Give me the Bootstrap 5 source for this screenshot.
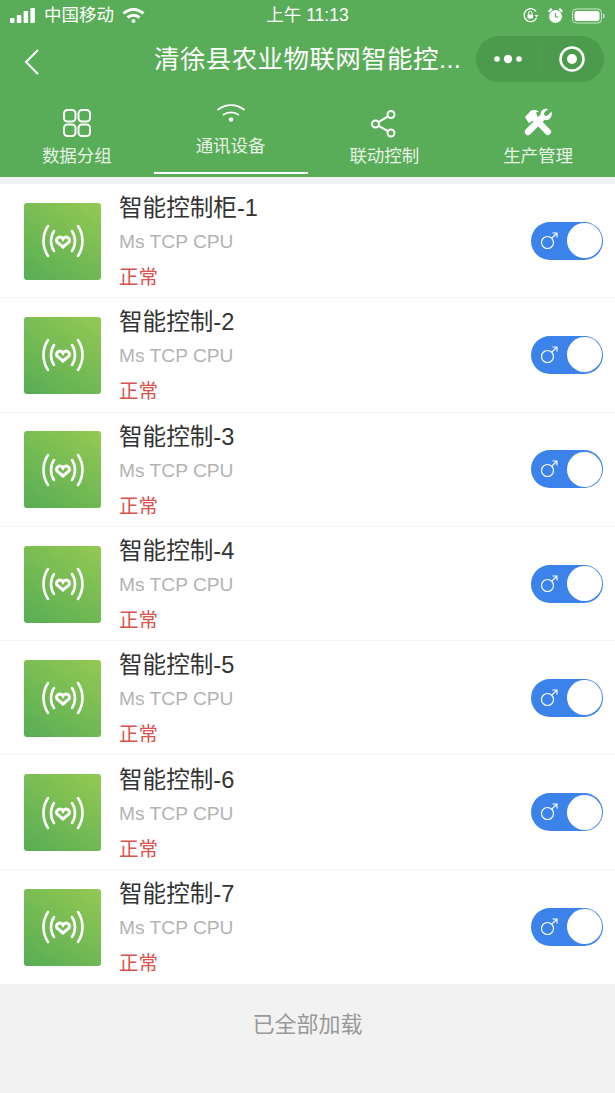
<!DOCTYPE html>
<html lang="zh">
<head>
  <meta charset="UTF-8">
  <meta name="viewport" content="width=device-width, initial-scale=1.0">
  <title>通讯设备</title>
  <link href="https://cdn.jsdelivr.net/npm/bootstrap@5.3.0/dist/css/bootstrap.min.css" rel="stylesheet">
  <style>
    html, body {
      height: 100%;
    }
    body {
      font-family: "Liberation Sans", "Noto Sans CJK SC", sans-serif;
      background-color: #f2f2f2;
      overflow: hidden;
    }
    .app-head {
      background-color: #5aad58;
      color: #fff;
      height: 177px;
    }
    .status-bar {
      height: 31px;
      padding: 0 10px;
      font-size: 17.5px;
      line-height: 31px;
    }
    .status-side {
      flex: 1 1 0;
    }
    .title-bar {
      height: 56px;
      padding: 0 11px 0 23px;
    }
    .title-text {
      width: 308px;
      margin-left: 131px;
      margin-right: 14px;
      font-size: 25.5px;
      letter-spacing: .4px;
      white-space: nowrap;
      text-align: left;
      flex: none;
    }
    .back-ico {
      position: absolute;
      margin-top: 6px;
      margin-left: 1px;
    }
    .capsule {
      width: 128px;
      height: 46px;
      border-radius: 23px;
      background-color: #4c9a4c;
      flex: none;
    }
    .capsule-part {
      flex: 1 1 0;
    }
    .capsule-line {
      width: 1px;
      height: 28px;
      background-color: #569f55;
    }
    .tab-row {
      height: 90px;
    }
    .tab-item {
      flex: 1 1 0;
      font-size: 17.5px;
      line-height: 24px;
      color: #e6f3e5;
      padding-top: 20px;
      position: relative;
    }
    .tab-item svg {
      height: 32px;
      margin-bottom: 5px;
    }
    .tab-on {
      padding-top: 12px;
    }
    .tab-on svg {
      margin-bottom: 3px;
    }
    .tab-on::after {
      content: "";
      position: absolute;
      left: 0;
      right: 0;
      bottom: 3px;
      height: 2.500px;
      background-color: #fff;
    }
    .dev-list {
      margin-top: 7px;
      background-color: #fff;
    }
    .dev-row {
      height: 114.3px;
      padding-left: 24px;
      padding-right: 12px;
      border-bottom: 1px solid #f6f6f6;
    }
    .dev-row:last-child {
      border-bottom: 0;
    }
    .dev-pic {
      width: 77px;
      height: 77px;
      border-radius: 3px;
      background: linear-gradient(35deg, #57ad55, #94c952);
      flex: none;
      margin-top: 1px;
    }
    .dev-info {
      margin-left: 18px;
      margin-top: 1px;
    }
    .dev-name {
      font-size: 23.6px;
      line-height: 40px;
      margin-bottom: -4px;
      color: #333;
    }
    .dev-type {
      font-size: 19.2px;
      line-height: 36px;
      color: #b3b3b3;
    }
    .dev-state {
      font-size: 19.5px;
      line-height: 34px;
      color: #d9534f;
    }
    .dev-switch {
      width: 72px;
      height: 38px;
      border-radius: 19px;
      background-color: #3b82ea;
      padding: 1.5px;
      flex: none;
    }
    .switch-ico {
      margin-left: 7px;
    }
    .switch-knob {
      width: 35px;
      height: 35px;
      border-radius: 50%;
      background-color: #fff;
    }
    .load-end {
      padding-top: 26px;
      font-size: 22px;
      line-height: 30px;
      color: #999;
    }
  </style>
</head>
<body>
<div class="app-head">
  <div class="status-bar d-flex align-items-center">
    <div class="status-side d-flex align-items-center">
      <svg width="26" height="16" viewBox="0 0 26 16" fill="#fff"><rect x="0" y="10" width="4.500" height="5" rx="1"/><rect x="6.800" y="7" width="4.500" height="8" rx="1"/><rect x="13.600" y="3" width="4.500" height="12" rx="1"/><rect x="20.400" y="0" width="4.500" height="15" rx="1"/></svg>
      <span class="ms-1 ps-1">中国移动</span>
      <svg class="ms-2" width="23" height="17" viewBox="0 0 23 17" fill="none" stroke="#fff" stroke-width="3"><path d="M1.500 6.500c6-5.500 14-5.500 20 0"/><path d="M5.500 10.500c3.500-3 8.500-3 12 0"/><circle cx="11.500" cy="14" r="1.500" fill="#fff" stroke-width="1"/></svg>
    </div>
    <div>上午 11:13</div>
    <div class="status-side d-flex align-items-center justify-content-end gap-2">
      <svg width="17" height="17" viewBox="0 0 17 17" fill="none" stroke="#fff" stroke-width="1.300"><path d="M14 4.500A6.500 6.500 0 1 0 14.500 11"/><path d="M12.500 8h4l-2 2.500z" fill="#fff" stroke="none"/><rect x="5.500" y="7.500" width="5.500" height="4" fill="#fff" stroke="none"/><path d="M6.500 7.500V6a1.700 1.700 0 0 1 3.500 0v1.500" stroke-width="1"/></svg>
      <svg width="17" height="17" viewBox="0 0 17 17" fill="#fff"><circle cx="8.500" cy="9.500" r="6.500"/><path d="M1 4l3-3 1.500 1.500-3 3zM16 4l-3-3-1.500 1.500 3 3z"/><path d="M8.500 6v4h3" fill="none" stroke="#5aad58" stroke-width="1.200"/></svg>
      <svg width="33" height="16" viewBox="0 0 33 16"><rect x=".5" y="1" width="29" height="14" rx="3.500" fill="none" stroke="#cfe6ce"/><rect x="2.500" y="3" width="25" height="10" rx="2" fill="#fff"/><rect x="31" y="6" width="1.500" height="4" fill="#cfe6ce"/></svg>
    </div>
  </div>
  <div class="title-bar d-flex align-items-center position-relative">
    <svg class="back-ico" width="16" height="28" viewBox="0 0 16 28" fill="none" stroke="#fff" stroke-width="2"><path d="M14 2 2 14l12 12"/></svg>
    <div class="title-text">清徐县农业物联网智能控...</div>
    <div class="capsule d-flex align-items-center">
      <div class="capsule-part d-flex justify-content-center">
        <svg width="30" height="10" viewBox="0 0 30 10" fill="#fff"><circle cx="4" cy="5" r="2.800"/><circle cx="15" cy="5" r="4.200"/><circle cx="26" cy="5" r="2.800"/></svg>
      </div>
      <div class="capsule-line"></div>
      <div class="capsule-part d-flex justify-content-center">
        <svg width="26" height="26" viewBox="0 0 26 26"><circle cx="13" cy="13" r="11.500" fill="none" stroke="#fff" stroke-width="2.500"/><circle cx="13" cy="13" r="5" fill="#fff"/></svg>
      </div>
    </div>
  </div>
  <div class="tab-row d-flex text-center">
    <div class="tab-item">
      <svg class="d-block mx-auto" width="28" height="28" viewBox="0 0 28 28" fill="none" stroke="#fff" stroke-width="2"><rect x="1" y="1" width="11.500" height="11.500" rx="3.500"/><rect x="15.500" y="1" width="11.500" height="11.500" rx="3.500"/><rect x="1" y="15.500" width="11.500" height="11.500" rx="3.500"/><rect x="15.500" y="15.500" width="11.500" height="11.500" rx="3.500"/></svg>
      <div>数据分组</div>
    </div>
    <div class="tab-item tab-on">
      <svg class="d-block mx-auto" width="30" height="30" viewBox="0 0 30 30" fill="none" stroke="#fff" stroke-width="1.800"><path d="M1.500 10c8-6.500 19-6.500 27 0"/><path d="M7 15c4.800-3.500 11.200-3.500 16 0"/><circle cx="15" cy="19.500" r="2.200" fill="#fff" stroke="none"/></svg>
      <div>通讯设备</div>
    </div>
    <div class="tab-item">
      <svg class="d-block mx-auto" width="28" height="28" viewBox="0 0 28 28" fill="none" stroke="#fff" stroke-width="2"><circle cx="21" cy="5.500" r="3.500"/><circle cx="5.500" cy="15" r="3.500"/><circle cx="21" cy="24" r="3.500"/><path d="M18 7.300 8.500 13.200M8.500 16.800 18 22.200"/></svg>
      <div>联动控制</div>
    </div>
    <div class="tab-item">
      <svg class="d-block mx-auto" width="30" height="30" viewBox="0 0 30 30" fill="#fff"><path d="M2 9 8 2.500c3-1 6-.5 8 1l-3 1 1.500 4L27.500 22c1 1 1 2.500 0 3.500l-1 1c-1 1-2.500 1-3.500 0L10 13l-2 .5-2 2z"/><path d="M28.500 3.500 24 8l-2.500-.5L21 5l4-4c-3-1-7.500 1-7.500 5.500L3 21c-2 2-1.500 3.500-.5 5s3 2 5 0L21.500 12c5 1 8.500-3.500 7-8.500z"/></svg>
      <div>生产管理</div>
    </div>
  </div>
</div>

<div class="dev-list" id="devList"></div>
<div class="load-end text-center">已全部加载</div>

<script>
  // device rows are all the same, only the name differs
  const names = ['智能控制柜-1', '智能控制-2', '智能控制-3', '智能控制-4', '智能控制-5', '智能控制-6', '智能控制-7'];
  const devList = document.getElementById('devList');

  devList.innerHTML = names.map(name => `
    <div class="dev-row d-flex align-items-center">
      <div class="dev-pic d-flex align-items-center justify-content-center">
        <svg width="44" height="36" viewBox="0 0 44 36" fill="none" stroke="#fff" stroke-width="2.600" stroke-linecap="round">
          <path d="M7 3C1 12 1 24 7 33"/>
          <path d="M13 8c-4 6-4 14 0 20"/>
          <path d="M37 3c6 9 6 21 0 30"/>
          <path d="M31 8c4 6 4 14 0 20"/>
          <path d="M22 24l-5.500-4.500c-3.500-3.500 3-8 5.500-3.500 2.500-4.500 9 0 5.500 3.500z" stroke-width="3"/>
        </svg>
      </div>
      <div class="dev-info flex-grow-1">
        <div class="dev-name">${name}</div>
        <div class="dev-type">Ms TCP CPU</div>
        <div class="dev-state">正常</div>
      </div>
      <div class="dev-switch d-flex align-items-center justify-content-between">
        <svg class="switch-ico" width="18" height="18" viewBox="0 0 18 18" fill="none" stroke="#fff" stroke-width="1.200"><circle cx="7.500" cy="10.500" r="6"/><path d="M11.800 6.200 17 1M12.500 1H17v4.500"/></svg>
        <div class="switch-knob"></div>
      </div>
    </div>`).join('');
</script>
<script src="https://cdn.jsdelivr.net/npm/bootstrap@5.3.0/dist/js/bootstrap.bundle.min.js"></script>
</body>
</html>
